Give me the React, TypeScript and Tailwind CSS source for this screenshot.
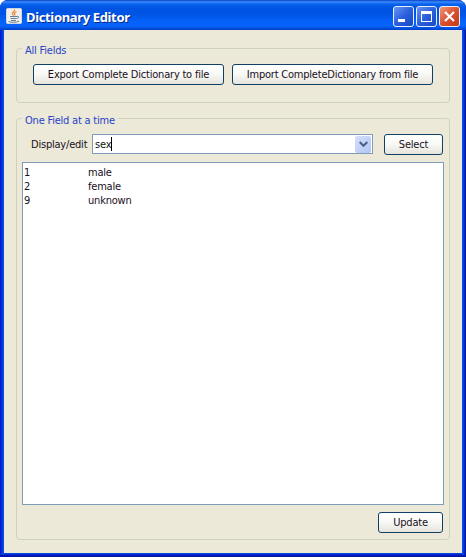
import type { ReactNode } from 'react';

function XpButton({ children, className }: { children: ReactNode; className: string }) {
  return (
    <button
      className={`flex h-[21px] shrink-0 items-center justify-center whitespace-nowrap rounded-[3px] border border-[#123f66] bg-linear-to-b from-white via-[#f8f8f5] to-[#e6e4da] pt-px text-[#20101c] ${className}`}
    >
      {children}
    </button>
  );
}

function Group({ title, className, children }: { title: string; className: string; children: ReactNode }) {
  return (
    <section className={`w-[434px] rounded-[4px] border border-[#d0d0bf] ${className}`}>
      <h2 className="-mt-[7px] mb-[-1px] ml-[5px] h-[16px] w-fit whitespace-nowrap bg-[#ece9d8] px-[3px] pt-px leading-[15px] text-[#2743c8]">{title}</h2>
      {children}
    </section>
  );
}

function JavaIcon() {
  return (
    <svg width="16" height="16" viewBox="0 0 16 16" fill="none">
      <rect x="0.5" y="0.5" width="15" height="15" rx="1" fill="#f1f0ec" stroke="#d5d6dc" />
      <path d="M8.5 1.5c1 2-3 2.500-2 4.500l1 1.500M10.500 3.500C8 5 8 5.500 9 7.500" stroke="#e58a39" strokeWidth="1.3" />
      <path d="M4 8.500h7M4.500 10.500h6M5 12.500h5M11 8.500c3-.5 2 2-.5 2M2.500 13.500c3 1.200 8 1 10.500-.3" stroke="#647d98" />
    </svg>
  );
}

const captionBase = 'flex size-[21px] items-center justify-center rounded-[3px] border border-[#e8effc]';

const entries = [
  ['1', 'male'],
  ['2', 'female'],
  ['9', 'unknown'],
];

export default function App() {
  return (
    <div className="h-[557px] w-[466px] bg-white">
      <div className="flex h-[557px] w-[466px] flex-col overflow-hidden rounded-t-[8px] bg-[#0019cf] font-['DejaVu_Sans_Condensed','DejaVu_Sans',sans-serif] text-[11px] tracking-[-0.21px]">
        <header className="flex h-[30px] shrink-0 items-center bg-[linear-gradient(180deg,#0a3fc4_0px,#3a8cff_2px,#0a62ee_4px,#0054e3_8px,#0054e3_14px,#0563fb_22px,#0563fb_26px,#0040c8_30px)] pl-[6px] pr-[6px] pt-[2px]">
          <JavaIcon />
          <h1 className="ml-[4px] mt-px flex-1 whitespace-nowrap font-['Noto_Sans',sans-serif] text-[13px] font-bold leading-[18px] tracking-[-0.35px] text-white [text-shadow:1px_1px_#0a2a8a]">Dictionary Editor</h1>
          <div className="flex gap-[2px]">
            <button className={`${captionBase} bg-linear-to-br from-[#6a94f2] via-[#2a5fdd] to-[#1a48c4]`}>
              <span className="mr-[4px] mt-[9px] h-[3px] w-[7px] bg-white" />
            </button>
            <button className={`${captionBase} bg-linear-to-br from-[#6a94f2] via-[#2a5fdd] to-[#1a48c4]`}>
              <span className="h-[11px] w-[11px] border border-t-[3px] border-white" />
            </button>
            <button className={`${captionBase} bg-linear-to-br from-[#ee9477] via-[#dc5030] to-[#c23a12]`}>
              <svg width="13" height="13" viewBox="0 0 13 13">
                <path d="M2 2l9 9M11 2l-9 9" stroke="white" strokeWidth="2.2" />
              </svg>
            </button>
          </div>
        </header>
        <div className="flex h-[527px] bg-[linear-gradient(0deg,#00138c_0px,#0019cf_2px,#0855dd_4px,#0855dd_100%)]">
          <div className="h-[525px] w-[4px] shrink-0 bg-linear-to-r from-[#0019cf] via-[#0831d9] to-[#0855ee]" />
          <main className="flex h-[523px] w-[458px] shrink-0 flex-col bg-[#ece9d8] pl-[12px] pt-[18px]">
            <Group title="All Fields" className="h-[55px]">
              <div className="ml-[16px] mt-[7px] flex gap-[8px]">
                <XpButton className="w-[191px]">Export Complete Dictionary to file</XpButton>
                <XpButton className="w-[201px]">Import CompleteDictionary from file</XpButton>
              </div>
            </Group>
            <Group title="One Field at a time" className="mt-[15px] h-[422px]">
              <div className="mt-[7px] flex h-[21px] items-center pl-[14px]">
                <label className="w-[61px] whitespace-nowrap pt-[2px] text-[#20101c]">Display/edit</label>
                <div className="mb-px flex h-[20px] w-[281px] items-center border border-[#7f9db9] bg-white pl-[2px] pr-px">
                  <span className="pt-[2px] text-[#111]">sex</span>
                  <span className="h-[14px] w-px bg-black" />
                  <span className="ml-auto flex h-[17px] w-[16px] items-center justify-center rounded-[2px] bg-linear-to-br from-[#d5e0fd] to-[#b0c5f4]">
                    <svg width="9" height="7" viewBox="0 0 9 7">
                      <path d="M0.700 1l3.800 3.800L8.300 1" fill="none" stroke="#4d6185" strokeWidth="2" />
                    </svg>
                  </span>
                </div>
                <XpButton className="ml-[11px] w-[59px]">Select</XpButton>
              </div>
              <div className="ml-[5px] mt-[7px] h-[343px] w-[422px] border border-[#7f9db9] bg-white pl-px pt-[3px] text-[#20101c]">
                {entries.map(([code, label]) => (
                  <div key={code} className="flex h-[14px] items-center leading-[14px]">
                    <span className="w-[64px]">{code}</span>
                    <span>{label}</span>
                  </div>
                ))}
              </div>
              <XpButton className="ml-[361px] mt-[7px] w-[65px]">Update</XpButton>
            </Group>
          </main>
          <div className="h-[525px] w-[4px] shrink-0 bg-linear-to-r from-[#0855ee] via-[#0831d9] to-[#00138c]" />
        </div>
      </div>
    </div>
  );
}
